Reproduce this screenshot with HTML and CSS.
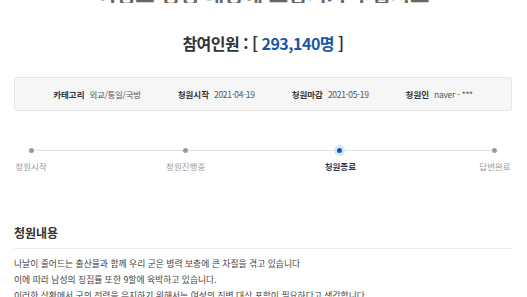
FILE: index.html
```html
<!DOCTYPE html>
<html lang="ko">

<head>
    <meta charset="UTF-8">
    <meta name="viewport" content="width=device-width, initial-scale=1.0">
    <title>청원 상세</title>
    <link rel="stylesheet" href="styles.css">
</head>

<body>
    <div class="petition">
        <div class="title-wrap">
            <h1 class="petition-title">여성도 징병 대상에 포함시켜 주십시오</h1>
        </div>

        <p class="petition-count">참여인원 : [ <span class="count-num">293,140명</span> ]</p>

        <!-- 청원 정보 -->
        <ul class="petition-info">
            <li><strong>카테고리</strong><span>외교/통일/국방</span></li>
            <li><strong>청원시작</strong><span>2021-04-19</span></li>
            <li><strong>청원마감</strong><span>2021-05-19</span></li>
            <li><strong>청원인</strong><span>naver - ***</span></li>
        </ul>

        <!-- 진행 단계 -->
        <ol class="progress">
            <li class="step">청원시작</li>
            <li class="step">청원진행중</li>
            <li class="step active">청원종료</li>
            <li class="step">답변완료</li>
        </ol>

        <h2 class="section-title">청원내용</h2>
        <div class="petition-body">
            <p>나날이 줄어드는 출산율과 함께 우리 군은 병력 보충에 큰 차질을 겪고 있습니다</p>
            <p>이에 따라 남성의 징집률 또한 9할에 육박하고 있습니다.</p>
            <p>이러한 상황에서 군의 전력을 유지하기 위해서는 여성의 징병 대상 포함이 필요하다고 생각합니다.</p>
        </div>
    </div>
</body>

</html>
```

FILE: styles.css
```css
body {
    margin: 0;
    font-family: "Noto Sans CJK KR", "Noto Sans", sans-serif;
    color: #333;
    background: #fff;
    overflow: hidden;
}

.petition {
    padding: 0 15px 0 14px;
}

/* 제목은 화면 위로 잘려 아랫부분만 보임 */
.title-wrap {
    height: 3px;
    overflow: hidden;
    display: flex;
    align-items: flex-end;
    justify-content: center;
}

.petition-title {
    margin: 0 0 -1px;
    flex: none;
    font-size: 21px;
    line-height: 21px;
    font-weight: 700;
    color: #666;
    white-space: nowrap;
}

.petition-count {
    margin: 30px 0 0;
    height: 20px;
    line-height: 20px;
    font-size: 16px;
    font-weight: 700;
    color: #333;
    text-align: center;
    letter-spacing: -0.5px;
}

.count-num {
    color: #1b56a5;
}

.petition-info {
    display: flex;
    justify-content: center;
    align-items: center;
    gap: 37px;
    margin: 24px 0 0;
    padding: 0;
    height: 32px;
    list-style: none;
    background: #f6f6f6;
    border: 1px solid #e6e6e6;
    border-radius: 2px;
    font-size: 8.5px;
}

.petition-info li {
    display: flex;
    align-items: center;
    gap: 5px;
}

.petition-info strong {
    color: #333;
    font-weight: 700;
}

.petition-info span {
    color: #555;
    letter-spacing: -0.3px;
}

.progress {
    display: flex;
    justify-content: space-between;
    position: relative;
    margin: 33px 0 0;
    padding: 0;
    list-style: none;
}

.progress::before {
    content: "";
    position: absolute;
    left: 16px;
    right: 16px;
    top: 6px;
    height: 1px;
    background: #e2e2e2;
}

.step {
    position: relative;
    width: 34px;
    padding-top: 16px;
    font-size: 8.5px;
    line-height: 12px;
    color: #9a9a9a;
    text-align: center;
    white-space: nowrap;
    display: flex;
    justify-content: center;
}

.step::before {
    content: "";
    position: absolute;
    left: 50%;
    top: 4px;
    width: 5px;
    height: 5px;
    margin-left: -2.5px;
    border-radius: 50%;
    background: #999;
}

.step.active {
    color: #2c3a57;
    font-weight: 700;
}

.step.active::before {
    top: 1px;
    width: 5px;
    height: 5px;
    margin-left: -6px;
    border: 3.5px solid #d6e7fb;
    background: #1656b0;
}

.section-title {
    margin: 52px 0 0;
    padding-bottom: 6px;
    border-bottom: 1px solid #ebebeb;
    font-size: 12px;
    line-height: 18px;
    font-weight: 700;
    color: #333;
}

.petition-body {
    padding-top: 7px;
    font-size: 8.8px;
    line-height: 16px;
    color: #444;
}

.petition-body p {
    margin: 0;
    white-space: nowrap;
}
```
